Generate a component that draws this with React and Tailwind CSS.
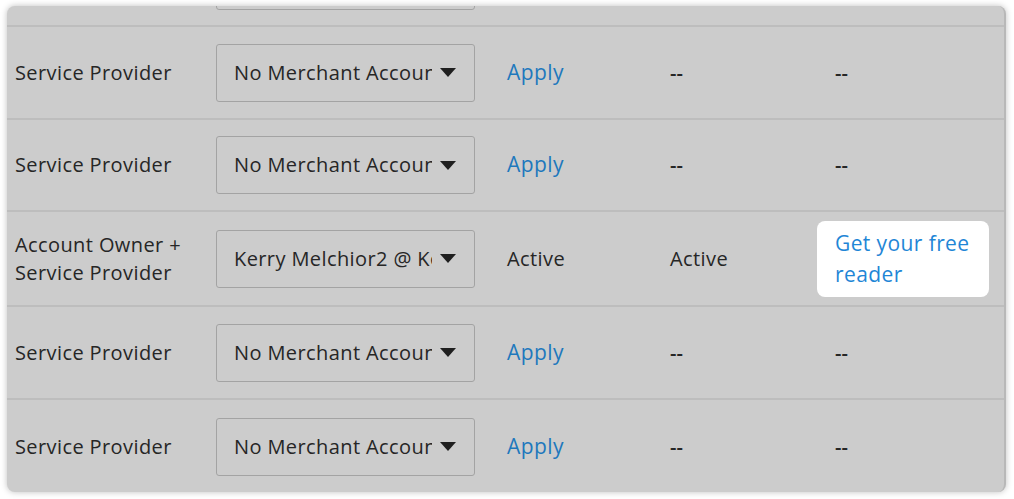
import React from "react";

const font = { fontFamily: "'Open Sans', Lato, sans-serif" };

function Caret() {
  return (
    <svg width="16" height="9" viewBox="0 0 16 9" className="shrink-0">
      <path d="M0 0 L16 0 L8 9 Z" fill="#1f1f1f" />
    </svg>
  );
}

function Select({ text, className = "" }) {
  return (
    <div
      className={
        "flex h-[58px] w-[259px] shrink-0 items-center rounded-[3px] border border-[#a3a3a3] bg-[#cccccc] pl-[17px] pr-[18px] " +
        className
      }
    >
      <div className="w-[198px] overflow-hidden whitespace-nowrap text-[20px] tracking-[0.4px] text-[#262626]">{text}</div>
      <div className="ml-auto">
        <Caret />
      </div>
    </div>
  );
}

function Row({ h, role, select, c3, c4, c5, last }) {
  return (
    <div
      className={
        "grid grid-cols-[201px_291px_163px_147px_1fr] items-center pl-[8px] " +
        (last ? "" : "border-b-2 border-[#bdbdbd]")
      }
      style={{ height: h }}
    >
      <div className="text-[20px] leading-[28px] tracking-[0.4px] text-[#262626]">{role}</div>
      <div>
        <Select text={select} />
      </div>
      <div>{c3}</div>
      <div>{c4}</div>
      <div>{c5}</div>
    </div>
  );
}

const apply = <span className="text-[21px] tracking-[0.4px] text-[#1d78bd]">Apply</span>;
const dash = <span className="text-[20px] font-semibold text-[#262626]">--</span>;

export default function App() {
  return (
    <div className="h-[499px] w-[1014px] bg-white pl-[7px] pt-[6px]" style={font}>
      <div className="h-[486px] w-[999px] overflow-hidden rounded-[8px] border-r-2 border-[#b8b8b8] bg-[#cccccc] shadow-[0_0_6px_rgba(0,0,0,0.25)]">
        <div className="flex h-[21px] items-end border-b-2 border-[#bdbdbd] pb-[15px] pl-[209px]">
          <Select text="" />
        </div>
        <Row h={93} role="Service Provider" select="No Merchant Account" c3={apply} c4={dash} c5={<span className="pl-[18px]">{dash}</span>} />
        <Row h={92} role="Service Provider" select="No Merchant Account" c3={apply} c4={dash} c5={<span className="pl-[18px]">{dash}</span>} />
        <Row
          h={95}
          role={
            <>
              Account Owner +<br />Service Provider
            </>
          }
          select="Kerry Melchior2 @ Kerry"
          c3={<span className="text-[20px] tracking-[0.4px] text-[#262626]">Active</span>}
          c4={<span className="text-[20px] tracking-[0.4px] text-[#262626]">Active</span>}
          c5={
            <div className="w-[172px] rounded-[8px] bg-white px-[18px] py-[7px] text-[21px] leading-[31px] tracking-[0.4px] text-[#1f86d6]">
              Get your free reader
            </div>
          }
        />
        <Row h={93} role="Service Provider" select="No Merchant Account" c3={apply} c4={dash} c5={<span className="pl-[18px]">{dash}</span>} />
        <Row h={93} role="Service Provider" select="No Merchant Account" c3={apply} c4={dash} c5={<span className="pl-[18px]">{dash}</span>} last />
      </div>
    </div>
  );
}
